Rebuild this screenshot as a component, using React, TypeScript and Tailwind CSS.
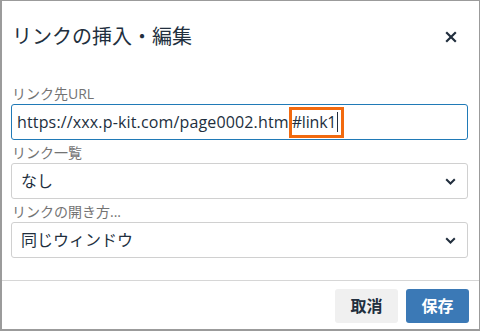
import React from "react";

const font = {
  fontFamily: '"Open Sans", "Noto Sans CJK JP", sans-serif',
};

const Chevron = () => (
  <svg width="11" height="7" viewBox="0 0 11 7" className="shrink-0">
    <path d="M1.2 1.2 L5.5 5.5 L9.8 1.2" fill="none" stroke="#222f3e" strokeWidth="2" />
  </svg>
);

const Label = ({ children }: { children: React.ReactNode }) => (
  <div className="h-[23px] pt-[4px] pl-[1px] text-[14px] leading-[18px] text-[#737373]">{children}</div>
);

const Select = ({ value }: { value: string }) => (
  <div className="flex h-[36px] items-center justify-between rounded-[3px] border border-[#d0d0d0] pl-[9px] pr-[11px] text-[16px] text-[#222f3e]">
    <span>{value}</span>
    <Chevron />
  </div>
);

export default function App() {
  return (
    <div
      style={font}
      className="flex h-[331px] w-[480px] flex-col border border-b-2 border-l-2 border-[#9b9b9b] bg-white"
    >
      <div className="flex h-[80px] items-center justify-between pb-[8px] pl-[10px] pr-[22px]">
        <h1 className="text-[20px] font-normal text-[#222f3e]">リンクの挿入・編集</h1>
        <svg width="12" height="12" viewBox="0 0 12 12">
          <path d="M1.2 1.2 L10.8 10.8 M10.8 1.2 L1.2 10.8" stroke="#222f3e" strokeWidth="2.2" />
        </svg>
      </div>

      <div className="flex flex-col pl-[9px] pr-[11px]">
        <Label>リンク先URL</Label>
        <div className="flex h-[36px] items-center rounded-[3px] border border-[#207ab7] pl-[5px] text-[16px] text-[#222f3e]">
          <span className="tracking-[0.15px]">https://xxx.p-kit.com/page0002.htm</span>
          <span className="relative ml-[3px] flex items-center leading-[20px] tracking-[-0.2px]">
            #link1
            <span className="ml-[1px] h-[20px] w-[1px] bg-[#222f3e]" />
            <span className="absolute -top-[5px] -bottom-[6px] -left-[3px] -right-[6px] border-[3px] border-[#f26a0f]" />
          </span>
        </div>
        <Label>リンク一覧</Label>
        <Select value="なし" />
        <Label>リンクの開き方...</Label>
        <Select value="同じウィンドウ" />
      </div>

      <div className="mt-auto flex h-[49px] justify-end gap-[8px] border-t border-[#d6d6d6] pt-[8px] pr-[10px]">
        <button className="h-[34px] w-[63px] rounded-[3px] bg-[#f0f0f0] text-[16px] font-bold text-[#222f3e]">
          取消
        </button>
        <button className="h-[34px] w-[63px] rounded-[3px] bg-[#3b79b6] text-[16px] font-bold text-white">
          保存
        </button>
      </div>
    </div>
  );
}
